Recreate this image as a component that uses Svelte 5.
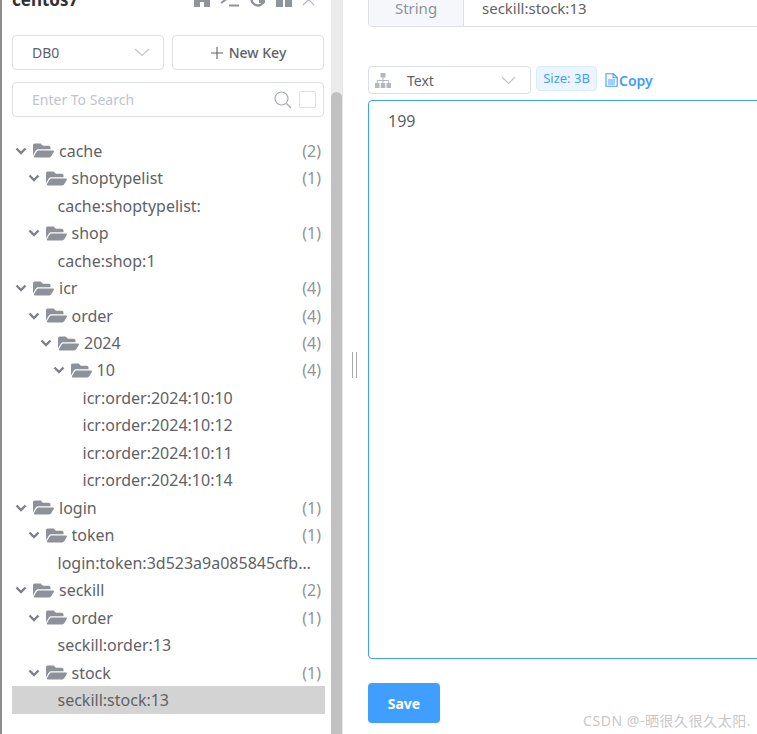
<script lang="ts">
  type Row = { label: string; depth: number; count?: number; selected?: boolean };

  const rows: Row[] = [
    { label: 'cache', depth: 0, count: 2 },
    { label: 'shoptypelist', depth: 1, count: 1 },
    { label: 'cache:shoptypelist:', depth: 1 },
    { label: 'shop', depth: 1, count: 1 },
    { label: 'cache:shop:1', depth: 1 },
    { label: 'icr', depth: 0, count: 4 },
    { label: 'order', depth: 1, count: 4 },
    { label: '2024', depth: 2, count: 4 },
    { label: '10', depth: 3, count: 4 },
    { label: 'icr:order:2024:10:10', depth: 3 },
    { label: 'icr:order:2024:10:12', depth: 3 },
    { label: 'icr:order:2024:10:11', depth: 3 },
    { label: 'icr:order:2024:10:14', depth: 3 },
    { label: 'login', depth: 0, count: 1 },
    { label: 'token', depth: 1, count: 1 },
    { label: 'login:token:3d523a9a085845cfb8e1c2f7', depth: 1 },
    { label: 'seckill', depth: 0, count: 2 },
    { label: 'order', depth: 1, count: 1 },
    { label: 'seckill:order:13', depth: 1 },
    { label: 'stock', depth: 1, count: 1 },
    { label: 'seckill:stock:13', depth: 1, selected: true }
  ];
</script>

<div class="page">
  <aside class="aside">
    <div class="aside-body">
      <div class="conn-head">
        <span class="conn-name">centos7</span>
        <div class="conn-icons">
          <svg width="16" height="16" viewBox="0 0 16 16"><path d="M8 0 0 7v9h6v-5h4v5h6V7z" fill="#8f939a" /></svg>
          <svg width="20" height="16" viewBox="0 0 20 16"><path d="M1 2l7 5-7 5" fill="none" stroke="#8f939a" stroke-width="2" /><path d="M9 14.500h10" stroke="#8f939a" stroke-width="2" /></svg>
          <svg width="16" height="16" viewBox="0 0 16 16"><path d="M14 10a6.500 6.500 0 1 1-1-6" fill="none" stroke="#8f939a" stroke-width="2.400" /><path d="M9 9h6v3H9z" fill="#8f939a" /></svg>
          <svg width="16" height="16" viewBox="0 0 16 16"><path d="M0 0h7v16H0zM9 0h7v16H9z" fill="#8f939a" /></svg>
          <svg width="13" height="16" viewBox="0 0 13 16"><path d="M1 3l11 11M12 3 1 14" stroke="#b4b7bd" stroke-width="1.200" /></svg>
        </div>
      </div>

      <div class="ops">
        <div class="box db-select">
          <span>DB0</span>
          <svg width="16" height="9" viewBox="0 0 16 9"><path d="M1 1l7 6.500L15 1" fill="none" stroke="#c0c4cc" stroke-width="1.200" /></svg>
        </div>
        <div class="box new-key">
          <svg width="14" height="14" viewBox="0 0 14 14"><path d="M7 1v12M1 7h12" stroke="#606266" stroke-width="1.100" /></svg>
          <span>New Key</span>
        </div>
      </div>

      <div class="box search">
        <span class="placeholder">Enter To Search</span>
        <svg width="18" height="18" viewBox="0 0 18 18"><circle cx="7.500" cy="7.500" r="6.500" fill="none" stroke="#a8abb2" stroke-width="1.200" /><path d="M12.500 12.500 17 17" stroke="#a8abb2" stroke-width="1.200" /></svg>
        <span class="check"></span>
      </div>

      <div class="tree">
        {#each rows as row}
          <div class="row" class:selected={row.selected} style="padding-left: {row.depth * 12.5 + 3}px">
            {#if row.count !== undefined}
              <svg class="chevron" width="12" height="8" viewBox="0 0 12 8"><path d="M1.500 1.500 6 6l4.500-4.500" fill="none" stroke="#7d8087" stroke-width="2.400" /></svg>
              <svg class="folder" width="21" height="19" viewBox="0 0 576 512"><path d="M572.694 292.093L500.27 416.248A63.997 63.997 0 0 1 444.989 448H45.025c-18.523 0-30.064-20.093-20.731-36.093l72.424-124.155A64 64 0 0 1 152 256h399.964c18.523 0 30.064 20.093 20.73 36.093zM152 224h328v-48c0-26.51-21.49-48-48-48H272l-64-64H48C21.49 64 0 85.49 0 112v278.046l69.077-118.418C86.214 242.25 117.989 224 152 224z" fill="#8d9199" /></svg>
              <span class="label">{row.label}</span>
              <span class="count">({row.count})</span>
            {:else}
              <span class="label leaf">{row.label}</span>
            {/if}
          </div>
        {/each}
      </div>
    </div>

    <div class="scrollbar"><div class="thumb"></div></div>
  </aside>

  <div class="splitter"><i></i><i></i></div>

  <main class="main">
    <div class="key-bar">
      <span class="type">String</span>
      <span class="key-name">seckill:stock:13</span>
    </div>

    <div class="format-bar">
      <div class="box format-select">
        <svg width="16" height="15" viewBox="0 0 16 15"><path d="M5.500 0h5v4.500h-5zM0 10h4.500v5H0zM5.750 10h4.500v5h-4.500zM11.500 10H16v5h-4.500z" fill="#b4b7bd" /><path d="M8 4v3.500M2.250 10V7.500h11.500V10M8 7.500V10" fill="none" stroke="#b4b7bd" /></svg>
        <span>Text</span>
        <svg class="caret" width="15" height="9" viewBox="0 0 15 9"><path d="M1 1l6.500 6.500L14 1" fill="none" stroke="#c0c4cc" stroke-width="1.200" /></svg>
      </div>
      <span class="size-tag">Size: 3B</span>
      <span class="copy">
        <svg width="13" height="14" viewBox="0 0 13 14"><path d="M1 .8h7.500L12.200 4.500v8.700H1zM8 .8v4h4.200M3 7h7M3 9h7M3 11h7" fill="none" stroke="#409eff" stroke-width="1.100" /></svg>
        <span>Copy</span>
      </span>
    </div>

    <div class="editor">199</div>

    <button class="save">Save</button>
  </main>

  <div class="watermark">CSDN @-晒很久很久太阳.</div>
</div>

<style>
  :global(body) {
    margin: 0;
    background: #fff;
  }

  .page {
    position: relative;
    display: flex;
    width: 757px;
    height: 734px;
    overflow: hidden;
    font-family: "Noto Sans", "Noto Sans CJK SC", sans-serif;
    color: #606266;
  }

  .aside {
    display: flex;
    flex: none;
    width: 343px;
    box-sizing: border-box;
    border-left: 2px solid #8c8c8c;
    border-right: 1px solid #e6e6e6;
  }

  .aside-body {
    flex: none;
    width: 329px;
    box-sizing: border-box;
    padding: 0 4px 0 10px;
  }

  .conn-head {
    display: flex;
    justify-content: space-between;
    align-items: flex-end;
    height: 7px;
    margin-bottom: 28px;
  }

  .conn-name {
    font-size: 17px;
    font-weight: 700;
    line-height: 22px;
    color: #303133;
    margin-bottom: -4px;
  }

  .conn-icons {
    display: flex;
    gap: 10px;
    align-items: flex-end;
    padding-right: 12px;
    flex: none;
  }

  .box {
    display: flex;
    align-items: center;
    box-sizing: border-box;
    border: 1px solid #dcdfe6;
    border-radius: 4px;
    background: #fff;
  }

  .ops {
    display: flex;
    gap: 8px;
    margin-bottom: 12px;
    width: 312px;
  }

  .db-select,
  .new-key {
    width: 152px;
    height: 35px;
    font-size: 14px;
  }

  .db-select {
    justify-content: space-between;
    padding: 0 13px 0 19px;
  }

  .new-key {
    justify-content: center;
    gap: 5px;
    font-weight: 500;
  }

  .search {
    width: 312px;
    height: 35px;
    padding: 0 7px 0 19px;
    gap: 7px;
  }

  .placeholder {
    flex: 1;
    font-size: 14px;
    color: #c0c4cc;
  }

  .check {
    width: 15px;
    height: 15px;
    border: 1px solid #dcdfe6;
    border-radius: 2px;
  }

  .tree {
    margin-top: 20px;
    width: 313px;
  }

  .row {
    display: flex;
    align-items: center;
    box-sizing: border-box;
    height: 27.47px;
    padding-right: 4px;
    font-size: 16px;
    white-space: nowrap;
  }

  .row.selected {
    background: #d3d3d3;
  }

  .chevron {
    flex: none;
    margin-right: 6px;
  }

  .folder {
    flex: none;
    margin-right: 5px;
  }

  .label {
    flex: 1;
    min-width: 0;
    overflow: hidden;
    text-overflow: ellipsis;
  }

  .leaf {
    margin: 0 4px 0 30px;
  }

  .count {
    flex: none;
    color: #909399;
  }

  .scrollbar {
    flex: none;
    width: 11px;
    background: #ebebeb;
  }

  .thumb {
    height: 100%;
    margin-top: 92px;
    background: #c1c1c1;
    border-radius: 6px 6px 0 0;
  }

  .splitter {
    flex: none;
    display: flex;
    align-items: center;
    justify-content: center;
    gap: 3px;
    width: 25px;
    padding: 0 2px 4px 0;
    box-sizing: border-box;
  }

  .splitter i {
    width: 1px;
    height: 26px;
    background: #a9a9a9;
  }

  .main {
    flex: none;
    width: 420px;
  }

  .key-bar {
    display: flex;
    align-items: center;
    box-sizing: border-box;
    height: 38px;
    margin-top: -11px;
    border: 1px solid #dcdfe6;
    border-radius: 4px;
    font-size: 15px;
  }

  .type {
    display: flex;
    align-items: center;
    justify-content: center;
    align-self: stretch;
    width: 94px;
    background: #f5f7fa;
    border-right: 1px solid #dcdfe6;
    color: #909399;
    border-radius: 4px 0 0 4px;
  }

  .key-name {
    padding-left: 18px;
  }

  .format-bar {
    display: flex;
    align-items: flex-start;
    margin-top: 39px;
    height: 34px;
  }

  .format-select {
    width: 163px;
    height: 28px;
    padding: 0 14px 0 6px;
    font-size: 14px;
  }

  .format-select span {
    margin-left: 16px;
    flex: 1;
  }

  .size-tag {
    box-sizing: border-box;
    width: 61px;
    height: 25px;
    margin: 0 0 0 5px;
    line-height: 23px;
    text-align: center;
    font-size: 13px;
    color: #409eff;
    background: #ecf5ff;
    border: 1px solid #d9ecff;
    border-radius: 4px;
  }

  .copy {
    display: flex;
    align-items: center;
    gap: 1px;
    height: 28px;
    margin-left: 8px;
    font-size: 14px;
    font-weight: 600;
    color: #409eff;
  }

  .editor {
    box-sizing: border-box;
    height: 559px;
    padding: 9px 19px;
    border: 1px solid #409eff;
    border-radius: 4px;
    font-size: 16px;
    line-height: 22px;
  }

  .save {
    display: block;
    width: 72px;
    height: 40px;
    margin-top: 24px;
    border: none;
    border-radius: 4px;
    background: #409eff;
    color: #fff;
    font-family: inherit;
    font-size: 14px;
    font-weight: 700;
  }

  .watermark {
    position: absolute;
    left: 583px;
    top: 711px;
    font-size: 14px;
    line-height: 20px;
    letter-spacing: 0.55px;
    color: #c8c8c8;
    white-space: nowrap;
  }
</style>
